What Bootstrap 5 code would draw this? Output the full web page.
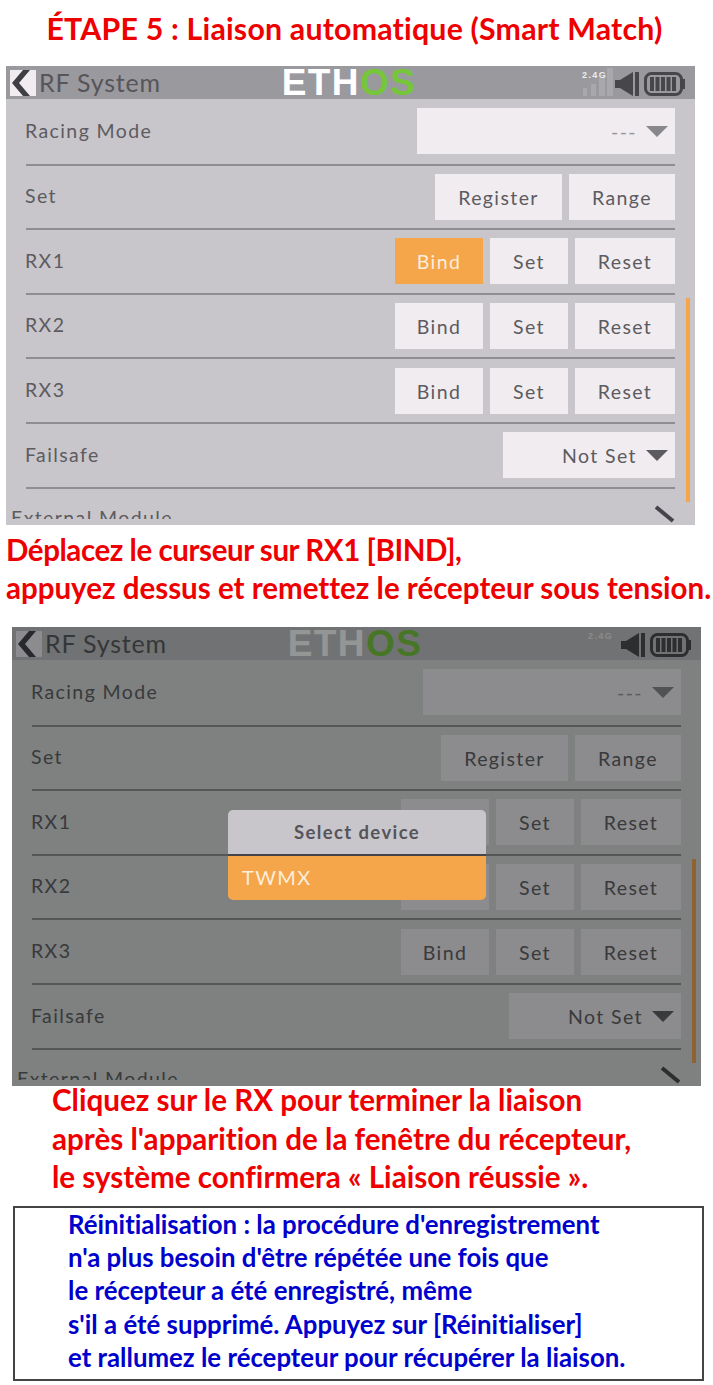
<!DOCTYPE html>
<html lang="fr">
  <head>
    <meta charset="UTF-8" />
    <title>Étape 5 – Liaison automatique</title>
    <meta name="viewport" content="width=device-width, initial-scale=1" />
    <link href="https://cdn.jsdelivr.net/npm/bootstrap@5.3.0/dist/css/bootstrap.min.css" rel="stylesheet" />
    <style>
      body { font-family: "Lato", "Liberation Sans", sans-serif; font-variant-ligatures: none; background: #fff; width: 713px; }
      .step-title { height: 66px; padding: 8px 4px 0 0; font-size: 30.3px; line-height: 40px; font-weight: 700; color: #ee0000; text-align: center; letter-spacing: .2px; margin: 0; }
      .note-red { font-weight: 700; color: #ee0000; margin: 0; white-space: nowrap; }
      .note-one { font-size: 29.5px; line-height: 37.5px; height: 102px; padding: 6px 0 0 6px; }
      .note-tight { letter-spacing: -.43px; }
      .note-two { font-size: 29.6px; line-height: 38.5px; height: 125px; margin-top: -5px; padding-left: 52px; }
      .info-box { margin-left: 13px; width: 691px; height: 175px; border: 2px solid #444; padding: 0 0 0 53px; color: #0000cc; font-weight: 700; font-size: 25.8px; line-height: 33.2px; white-space: nowrap; }

      .rf-screen { position: relative; width: 689px; height: 459px; background: #c8c6ca; color: #5c5b60; font-size: 19.5px; letter-spacing: 1.4px; }
      .screen-one { margin-left: 6px; }
      .screen-two { margin-left: 12px; background: #d8d9da; }
      .rf-head { height: 33px; background: #9a999e; padding: 0 7px 0 4px; }
      .screen-two .rf-head { background: #c0bfc2; }
      .rf-head-side { flex: 1 1 0; }
      .rf-back { width: 26px; height: 26px; background: #f0ecf0; }
      .rf-name { font-size: 25px; letter-spacing: .8px; line-height: 33px; margin-left: 3px; color: #56555a; }
      .rf-logo { font-family: "Liberation Sans", sans-serif; font-size: 37px; line-height: 37px; margin: -2px 0; font-weight: 700; color: #fff; letter-spacing: 1.4px; }
      .rf-logo span { color: #76c63a; }
      .rf-rows { padding: 0 20px; }
      .rf-row { height: 64.6px; border-bottom: 2px solid #8e8d92; }
      .rf-row:first-child { height: 66.6px; }
      .rf-row > span { margin: -2px 0 0 -1px; }
      .rf-last { height: 30.4px; overflow: hidden; margin-left: -15px; padding-top: 16px; line-height: 26px; }
      .rf-btn { height: 46px; padding: 1px 0 0; background: #f0ecf0; color: #5c5b60; border: 0; border-radius: 0; font-size: 19.5px; letter-spacing: 1.4px; line-height: 45px; }
      .rf-btn.is-on { background: #f5a54a; color: #fbeedd; }
      .w-register { width: 127px; }
      .w-range { width: 106px; }
      .w-bind { width: 88px; }
      .w-set { width: 78px; }
      .w-reset { width: 100px; }
      .w-select { width: 258px; color: #97969b; }
      .w-failsafe { width: 172px; }
      .rf-select { height: 46px; background: #f0ecf0; padding-right: 7px; }
      .rf-arrow { width: 0; height: 0; border-left: 11px solid transparent; border-right: 11px solid transparent; border-top: 11px solid #5c5b60; margin-left: 9px; }
      .w-select .rf-arrow { border-top-color: #88878c; }
      .gap-rf { gap: 7px; }
      .rf-scroll { position: absolute; left: 680px; top: 232px; width: 4px; height: 204px; background: #f5a54a; }
      .rf-pencil { position: absolute; left: 648px; top: 438px; }
      .rf-dim { position: absolute; inset: 0; background: rgba(12, 16, 14, .44); }
      .rf-dialog { position: absolute; left: 216px; top: 183px; width: 258px; height: 90px; border-radius: 5px; overflow: hidden; }
      .rf-dialog-title { height: 46px; background: #c8c6ca; border-bottom: 2px solid #45444a; text-align: center; font-weight: 700; font-size: 18.5px; line-height: 44px; color: #55545a; }
      .rf-dialog-item { height: 44px; background: #f5a54a; color: #fbeedd; padding-left: 14px; font-size: 20px; line-height: 42px; }
    </style>
  </head>
  <body>
    <h1 class="step-title">ÉTAPE 5 : Liaison automatique (Smart Match)</h1>

    <div class="rf-screen screen-one">
      <div class="rf-head d-flex align-items-center">
        <div class="rf-head-side d-flex align-items-center">
          <div class="rf-back d-flex"><svg width="26" height="26" viewBox="0 0 26 26"><path d="M20 0 9 13l11 13h-7L2 13 13 0z" fill="#3f3e44"/></svg></div>
          <span class="rf-name">RF System</span>
        </div>
        <div class="rf-logo">ETH<span>OS</span></div>
        <div class="rf-head-side d-flex justify-content-end">
          <svg width="108" height="31" viewBox="0 0 108 31">
            <path d="M3 21h4v8H3zM11 17h5v12h-5zM19 11h6v18h-6zM27 1h6v28h-6z" fill="#a9a8ac"/>
            <text x="2" y="11" font-family="Liberation Sans" font-size="9" font-weight="700" fill="#ececec">2.4G</text>
            <path d="M35 13h5L53 5v24L40 21h-5z" fill="#47464b"/><path d="M55 5h4v24h-4z" fill="#47464b"/>
            <rect x="65.5" y="6.5" width="36" height="21" rx="6" fill="none" stroke="#47464b" stroke-width="3"/>
            <path d="M103 12h2v10h-2zM70 10h4v14h-4zM75.5 10h4v14h-4zM81 10h4v14h-4zM86.5 10h4v14h-4zM92 10h4v14h-4z" fill="#47464b"/>
          </svg>
        </div>
      </div>
      <div class="rf-rows">
        <div class="rf-row d-flex align-items-center justify-content-between">
          <span>Racing Mode</span>
          <div class="rf-select w-select d-flex align-items-center justify-content-end"><b class="fw-normal">---</b><i class="rf-arrow"></i></div>
        </div>
        <div class="rf-row d-flex align-items-center justify-content-between">
          <span>Set</span>
          <div class="d-flex gap-rf"><button class="btn rf-btn w-register">Register</button><button class="btn rf-btn w-range">Range</button></div>
        </div>
        <div class="rf-row d-flex align-items-center justify-content-between">
          <span>RX1</span>
          <div class="d-flex gap-rf"><button class="btn rf-btn is-on w-bind">Bind</button><button class="btn rf-btn w-set">Set</button><button class="btn rf-btn w-reset">Reset</button></div>
        </div>
        <div class="rf-row d-flex align-items-center justify-content-between">
          <span>RX2</span>
          <div class="d-flex gap-rf"><button class="btn rf-btn w-bind">Bind</button><button class="btn rf-btn w-set">Set</button><button class="btn rf-btn w-reset">Reset</button></div>
        </div>
        <div class="rf-row d-flex align-items-center justify-content-between">
          <span>RX3</span>
          <div class="d-flex gap-rf"><button class="btn rf-btn w-bind">Bind</button><button class="btn rf-btn w-set">Set</button><button class="btn rf-btn w-reset">Reset</button></div>
        </div>
        <div class="rf-row d-flex align-items-center justify-content-between">
          <span>Failsafe</span>
          <div class="rf-select w-failsafe d-flex align-items-center justify-content-end"><b class="fw-normal">Not Set</b><i class="rf-arrow"></i></div>
        </div>
        <div class="rf-last">External Module</div>
      </div>
      <div class="rf-scroll"></div>
      <svg class="rf-pencil" width="22" height="20" viewBox="0 0 22 20"><path d="M2 3 19 17" stroke="#45444a" stroke-width="4"/></svg>
    </div>

    <div class="note-red note-one"><span class="note-tight">Déplacez le curseur sur RX1 [BIND],</span><br />appuyez dessus et remettez le récepteur sous tension.</div>

    <div class="rf-screen screen-two">
      <div class="rf-head d-flex align-items-center">
        <div class="rf-head-side d-flex align-items-center">
          <div class="rf-back d-flex"><svg width="26" height="26" viewBox="0 0 26 26"><path d="M20 0 9 13l11 13h-7L2 13 13 0z" fill="#3f3e44"/></svg></div>
          <span class="rf-name">RF System</span>
        </div>
        <div class="rf-logo">ETH<span>OS</span></div>
        <div class="rf-head-side d-flex justify-content-end">
          <svg width="108" height="31" viewBox="0 0 108 31">
            <text x="2" y="11" font-family="Liberation Sans" font-size="9" font-weight="700" fill="#ececec">2.4G</text>
            <path d="M35 13h5L53 5v24L40 21h-5z" fill="#47464b"/><path d="M55 5h4v24h-4z" fill="#47464b"/>
            <rect x="65.5" y="6.5" width="36" height="21" rx="6" fill="none" stroke="#47464b" stroke-width="3"/>
            <path d="M103 12h2v10h-2zM70 10h4v14h-4zM75.5 10h4v14h-4zM81 10h4v14h-4zM86.5 10h4v14h-4zM92 10h4v14h-4z" fill="#47464b"/>
          </svg>
        </div>
      </div>
      <div class="rf-rows">
        <div class="rf-row d-flex align-items-center justify-content-between">
          <span>Racing Mode</span>
          <div class="rf-select w-select d-flex align-items-center justify-content-end"><b class="fw-normal">---</b><i class="rf-arrow"></i></div>
        </div>
        <div class="rf-row d-flex align-items-center justify-content-between">
          <span>Set</span>
          <div class="d-flex gap-rf"><button class="btn rf-btn w-register">Register</button><button class="btn rf-btn w-range">Range</button></div>
        </div>
        <div class="rf-row d-flex align-items-center justify-content-between">
          <span>RX1</span>
          <div class="d-flex gap-rf"><button class="btn rf-btn w-bind">Bind</button><button class="btn rf-btn w-set">Set</button><button class="btn rf-btn w-reset">Reset</button></div>
        </div>
        <div class="rf-row d-flex align-items-center justify-content-between">
          <span>RX2</span>
          <div class="d-flex gap-rf"><button class="btn rf-btn w-bind">Bind</button><button class="btn rf-btn w-set">Set</button><button class="btn rf-btn w-reset">Reset</button></div>
        </div>
        <div class="rf-row d-flex align-items-center justify-content-between">
          <span>RX3</span>
          <div class="d-flex gap-rf"><button class="btn rf-btn w-bind">Bind</button><button class="btn rf-btn w-set">Set</button><button class="btn rf-btn w-reset">Reset</button></div>
        </div>
        <div class="rf-row d-flex align-items-center justify-content-between">
          <span>Failsafe</span>
          <div class="rf-select w-failsafe d-flex align-items-center justify-content-end"><b class="fw-normal">Not Set</b><i class="rf-arrow"></i></div>
        </div>
        <div class="rf-last">External Module</div>
      </div>
      <div class="rf-scroll"></div>
      <svg class="rf-pencil" width="22" height="20" viewBox="0 0 22 20"><path d="M2 3 19 17" stroke="#45444a" stroke-width="4"/></svg>
      <div class="rf-dim"></div>
      <div class="rf-dialog">
        <div class="rf-dialog-title">Select device</div>
        <div class="rf-dialog-item">TWMX</div>
      </div>
    </div>

    <div class="note-red note-two">Cliquez sur le RX pour terminer la liaison<br />après l'apparition de la fenêtre du récepteur,<br />le système confirmera « Liaison réussie ».</div>

    <div class="info-box">
      Réinitialisation : la procédure d'enregistrement<br />
      n'a plus besoin d'être répétée une fois que<br />
      le récepteur a été enregistré, même<br />
      s'il a été supprimé. Appuyez sur [Réinitialiser]<br />
      et rallumez le récepteur pour récupérer la liaison.
    </div>
    <script src="https://cdn.jsdelivr.net/npm/bootstrap@5.3.0/dist/js/bootstrap.bundle.min.js"></script>
  </body>
</html>
